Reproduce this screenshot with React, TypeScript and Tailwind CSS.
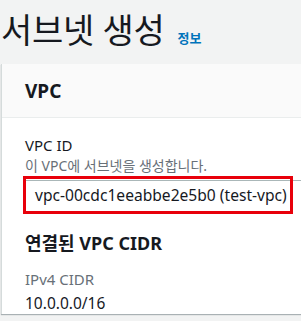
const font = { fontFamily: '"Noto Sans", "Noto Sans CJK KR", sans-serif' };

export default function App() {
  return (
    <div
      className="w-[301px] h-[321px] overflow-hidden bg-[#f2f3f3] text-[#16191f]"
      style={font}
    >
      {/* Page title */}
      <div className="flex items-baseline gap-[13px] pl-[1px] pt-[6px] h-[64px]">
        <h1 className="text-[34px] leading-[48px] font-normal tracking-[-0.3px]">서브넷 생성</h1>
        <a className="text-[13px] font-bold text-[#0073bb]">정보</a>
      </div>

      {/* Panel */}
      <div className="w-[420px] ml-[1px] bg-white border-l border-[#d5dbdb] shadow-[0_1px_1px_rgba(0,28,36,0.3)]">
        <div className="h-[54px] px-[23px] flex items-center bg-[#fafafa] border-b border-[#eaeded]">
          <h2 className="text-[19px] font-bold leading-[24px]">VPC</h2>
        </div>

        <div className="px-[23px] pt-[16px]">
          <div className="text-[15px] leading-[22px]">VPC ID</div>
          <div className="text-[14px] leading-[20px] text-[#687078]">
            이 VPC에 서브넷을 생성합니다.
          </div>

          <div className="relative h-[38px]">
            <div className="absolute left-0 top-[4px] w-[380px] h-[32px] border-t border-[#aab7b8]" />
            <div className="absolute left-[-2px] top-0 w-[270px] h-[38px] border-[3px] border-[#e8000b] flex items-center pl-[9px]">
              <span className="text-[15.6px] leading-[20px] whitespace-nowrap">
                vpc-00cdc1eeabbe2e5b0 (test-vpc)
              </span>
            </div>
          </div>

          <h3 className="mt-[17px] text-[18px] font-bold leading-[24px]">연결된 VPC CIDR</h3>
          <div className="mt-[14px] text-[15px] leading-[20px] text-[#687078]">IPv4 CIDR</div>
          <div className="mt-[3px] text-[15.5px] leading-[22px]">10.0.0.0/16</div>
        </div>
      </div>
    </div>
  );
}
